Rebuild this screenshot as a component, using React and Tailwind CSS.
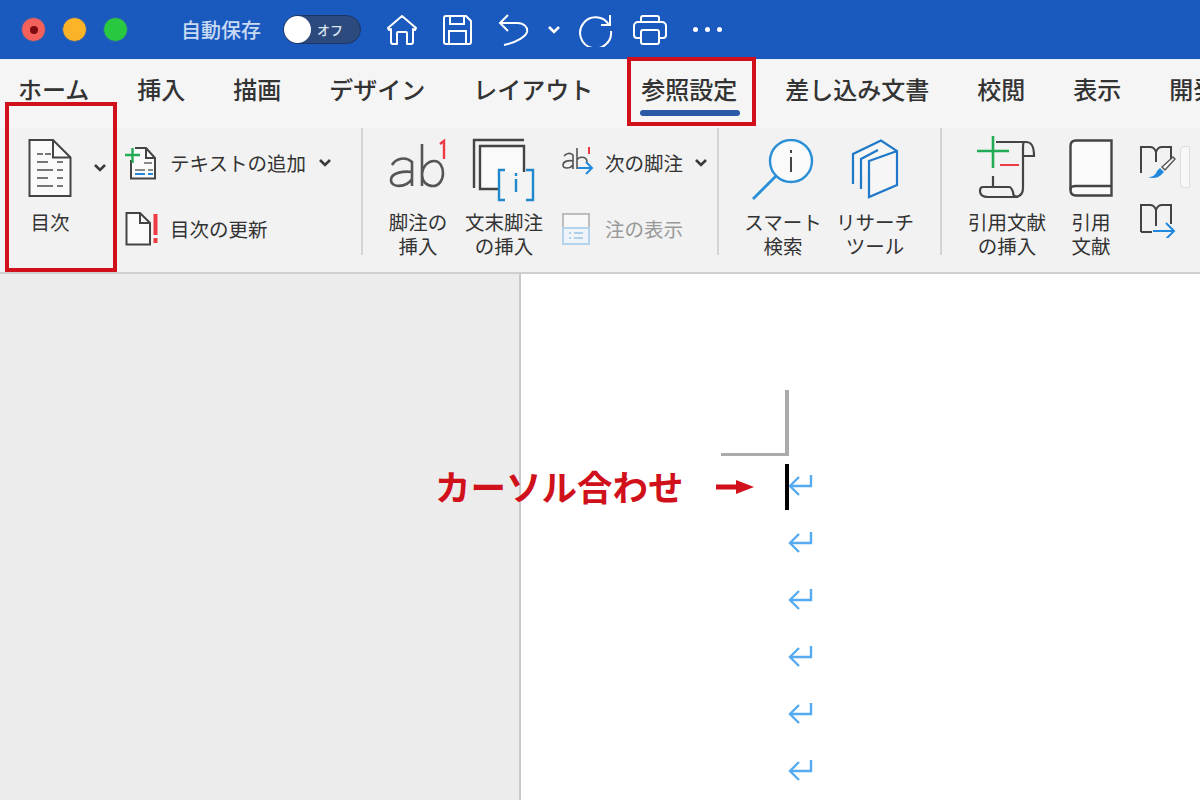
import React from "react";

const jp = { fontFamily: '"Noto Sans CJK JP", "Noto Sans", sans-serif' };

const tabs = ["ホーム", "挿入", "描画", "デザイン", "レイアウト", "参照設定", "差し込み文書", "校閲", "表示", "開発"];

const Chevron = ({ className = "" }) => (
  <svg width="14" height="10" viewBox="0 0 14 10" fill="none" className={className}>
    <path d="M2 2l5 5 5-5" stroke="#3a3a3a" strokeWidth="2.6" />
  </svg>
);

// big ribbon button: icon on top, one or two lines of label under it
const BigButton = ({ width, top, icon, lines, ml = "" }) => (
  <div className={`flex flex-col items-center shrink-0 ${width} ${ml}`}>
    <div className={`h-[82px] flex justify-center ${top}`}>{icon}</div>
    <div className="text-[19.5px] leading-[24px] text-[#333] text-center whitespace-nowrap">
      {lines.map((l) => (
        <div key={l}>{l}</div>
      ))}
    </div>
  </div>
);

const Separator = () => <div className="w-[2px] h-[127px] bg-[#d4d4d4] shrink-0" />;

const ReturnMark = () => (
  <svg width="26" height="24" viewBox="0 0 26 24" fill="none">
    <path d="M23 2v11H3" stroke="#55aaf0" strokeWidth="2.4" />
    <path d="M11 4l-9 9 9 9" stroke="#55aaf0" strokeWidth="2.4" />
  </svg>
);

const TocIcon = () => (
  <svg width="44" height="58" viewBox="0 0 44 58" fill="none">
    <path d="M1.5 1H25L42.5 18.5V57H1.5Z" fill="#fafafa" stroke="#444" strokeWidth="2" />
    <path d="M25 1V18.5H42.5" stroke="#444" strokeWidth="2" />
    <path d="M9 15h6M17 15h6M9 23h11M29 23h6M9 31h16M29 31h6M9 39h11M29 39h6M9 47h16M29 47h6" stroke="#777" strokeWidth="2" />
  </svg>
);

const AddTextIcon = () => (
  <svg width="32" height="34" viewBox="0 0 32 34" fill="none">
    <path d="M6 14V32.5H30V12L21 2H10" fill="#fafafa" stroke="#444" strokeWidth="2" />
    <path d="M21 2V12H30" stroke="#444" strokeWidth="2" />
    <path d="M0 9h15M7.500 2v15" stroke="#22aa55" strokeWidth="2.400" />
    <path d="M19 17h8M10 24h10M23 24h5" stroke="#666" strokeWidth="1.600" />
    <path d="M10 28h10M23 28h5" stroke="#2288dd" strokeWidth="2" />
  </svg>
);

const UpdateIcon = () => (
  <svg width="34" height="34" viewBox="0 0 34 34" fill="none">
    <path d="M1.500 1H15L25 11V32.500H1.500Z" fill="#fafafa" stroke="#444" strokeWidth="2" />
    <path d="M15 1V11H25" stroke="#444" strokeWidth="2" />
    <path d="M30.500 2V23M30.500 26V31" stroke="#ee3a43" strokeWidth="4" />
  </svg>
);

const FootnoteIcon = () => (
  <svg width="60" height="62" viewBox="0 0 60 62" fill="none">
    <path d="M4 27a13 13 0 0 1 20-3v24M24 34c-7-1-21 0-21 8 0 8 15 8 21-1" stroke="#555" strokeWidth="2.600" />
    <path d="M34 6V48M34 36c1-9 7-13 12-13 6 0 9 6 9 12 0 7-4 13-10 13-6 0-11-4-11-12" stroke="#555" strokeWidth="2.600" />
    <path d="M52 6l4-3V21" stroke="#ee3a43" strokeWidth="2.400" />
  </svg>
);

const EndnoteIcon = () => (
  <svg width="64" height="64" viewBox="0 0 64 64" fill="none">
    <path d="M2 50V2H52" stroke="#444" strokeWidth="2.400" />
    <path d="M8 51V8H52V51Z" fill="#fafafa" stroke="#444" strokeWidth="2.400" />
    <rect x="26" y="34" width="34" height="29" fill="#f4f4f4" />
    <path d="M33 32H27V62H33M54 32H61V62H54" stroke="#2288cc" strokeWidth="2.400" />
    <path d="M44 41V54M44 35V38" stroke="#2288cc" strokeWidth="2.400" />
  </svg>
);

const NextFootnoteIcon = () => (
  <svg width="32" height="32" viewBox="0 0 32 32" fill="none">
    <path d="M2 9a6 6 0 0 1 9-1v14M11 14C7 13 1 14 1 18c0 4 7 4 10 0" stroke="#555" strokeWidth="1.600" />
    <path d="M15 1V22M15 13c2-4 10-4 10 2" stroke="#555" strokeWidth="1.600" />
    <path d="M27 0V7" stroke="#ee3a43" strokeWidth="2" />
    <path d="M16 21H30M24 15l6 6-6 6" stroke="#2288dd" strokeWidth="2" />
  </svg>
);

const ShowNotesIcon = () => (
  <svg width="28" height="32" viewBox="0 0 28 32" fill="none">
    <path d="M1 1H27V31H1Z" fill="#f8f8f8" stroke="#bdbdbd" strokeWidth="2" />
    <path d="M1 15H27V31H1Z" fill="#eef4fa" stroke="#b4d3ec" strokeWidth="2" />
    <path d="M7 20h2M12 20h9M7 25h2M12 25h9" stroke="#9cc4e4" strokeWidth="1.600" />
  </svg>
);

const SearchIcon = () => (
  <svg width="62" height="62" viewBox="0 0 62 62" fill="none">
    <circle cx="39" cy="22" r="21" fill="#fafafa" stroke="#2a8fd6" strokeWidth="2.400" />
    <path d="M24 37L1 60" stroke="#2a8fd6" strokeWidth="2.800" />
    <path d="M39 18V33M39 11V14" stroke="#444" strokeWidth="2" />
  </svg>
);

const ResearchIcon = () => (
  <svg width="48" height="60" viewBox="0 0 48 60" fill="none">
    <path d="M2 45V15L30 1.500L46 12V46L18 58V22L46 12" fill="#f6f6f6" stroke="#1f78c8" strokeWidth="2.200" />
    <path d="M10 50V20L27 11" stroke="#1f78c8" strokeWidth="2.200" />
  </svg>
);

const CitationIcon = () => (
  <svg width="62" height="64" viewBox="0 0 62 64" fill="none">
    <path d="M20 6H50C55 6 58 9 58 20H48M48 6C47 7 47 9 47 12V52C47 58 44 61 38 61H12" fill="none" stroke="#444" strokeWidth="2.200" />
    <path d="M17 40V51H33C35 51 36 53 37 56C37 59 38 61 42 61M17 51H7C5 51 4 53 4 55C4 59 7 61 12 61H38" stroke="#444" strokeWidth="2.200" />
    <path d="M17 0V32M1 15H33" stroke="#22aa55" strokeWidth="2.600" />
    <path d="M24 29H43" stroke="#ee3a43" strokeWidth="2" />
  </svg>
);

const BookIcon = () => (
  <svg width="44" height="58" viewBox="0 0 44 58" fill="none">
    <path d="M7 1.500H42.500V56.500H7C3 56.500 1.500 54 1.500 51V7C1.500 4 3 1.500 7 1.500Z" fill="#fafafa" stroke="#444" strokeWidth="2.400" />
    <path d="M1.500 51C1.500 48 3 47 7 47H42.500" stroke="#444" strokeWidth="2.400" />
  </svg>
);

const StyleBookIcon = () => (
  <svg width="36" height="34" viewBox="0 0 36 34" fill="none">
    <path d="M1 27V1H10C13 1 15 3 16 6C17 3 19 1 22 1H31V14M16 6V16" stroke="#444" strokeWidth="2" />
    <path d="M8 31c4 0 7-1 9-6l3-3 4 4-3 3c-3 3-8 4-13 2Z" fill="#2288dd" />
    <path d="M22 21L33 11l2 2-10 11Z" fill="#fafafa" stroke="#555" strokeWidth="1.400" />
  </svg>
);

const BookArrowIcon = () => (
  <svg width="36" height="34" viewBox="0 0 36 34" fill="none">
    <path d="M1 28V1H10C13 1 15 3 16 6C17 3 19 1 22 1H31V20M16 6V22M1 28H12" stroke="#444" strokeWidth="2" />
    <path d="M13 27H33M26 19l8 8-8 8" stroke="#2288dd" strokeWidth="2" />
  </svg>
);

const App = () => {
  return (
    <div className="relative w-[1200px] h-[800px] overflow-hidden bg-[#ececec] flex flex-col" style={jp}>
      {/* title bar */}
      <div className="h-[59px] shrink-0 bg-[#1a5abf] flex items-center">
        <div className="w-[25px] h-[25px] rounded-full bg-[#f4605a] border border-[#2d5db0] ml-[21px] flex items-center justify-center">
          <div className="w-[8px] h-[8px] rounded-full bg-[#7c0c10]" />
        </div>
        <div className="w-[25px] h-[25px] rounded-full bg-[#fbb428] border border-[#2d5db0] ml-[16px]" />
        <div className="w-[25px] h-[25px] rounded-full bg-[#28c840] border border-[#2d5db0] ml-[16px]" />
        <div className="ml-[53px] text-[20px] font-medium text-[#c9daf4] whitespace-nowrap">自動保存</div>
        <div className="ml-[22px] w-[78px] h-[29px] rounded-full bg-[#2c4a7e] border border-[#1c3566] flex items-center">
          <div className="w-[27px] h-[27px] rounded-full bg-white" />
          <span className="ml-[6px] text-[13px] font-medium text-[#dbe4f2]">オフ</span>
        </div>
        <svg width="32" height="32" viewBox="0 0 32 32" fill="none" className="ml-[25px]">
          <path d="M2 14L16 2l14 12-1 2-2-1V28a2 2 0 0 1-2 2H21V19a1 1 0 0 0-1-1H12a1 1 0 0 0-1 1V30H7a2 2 0 0 1-2-2V15l-2 1Z" stroke="#fff" strokeWidth="2" strokeLinejoin="round" />
        </svg>
        <svg width="30" height="30" viewBox="0 0 30 30" fill="none" className="ml-[25px]">
          <path d="M3 1H23L28 6V27a2 2 0 0 1-2 2H3a2 2 0 0 1-2-2V3a2 2 0 0 1 2-2Z" stroke="#fff" strokeWidth="2" />
          <path d="M7 1V9H21V1M6 29V16H23V29" stroke="#fff" strokeWidth="2" />
        </svg>
        <svg width="32" height="32" viewBox="0 0 32 32" fill="none" className="ml-[25px]">
          <path d="M2 9H19C26 9 30 13 29 18C28 22 20 28 6 31" stroke="#fff" strokeWidth="2" transform="translate(0 0)" />
          <path d="M10 1L2 9l8 8" stroke="#fff" strokeWidth="2" />
        </svg>
        <Chevron className="ml-[17px] [&>path]:stroke-white" />
        <svg width="34" height="34" viewBox="0 0 34 34" fill="none" className="ml-[18px]">
          <path d="M30 12A15.500 15.500 0 1 0 32 18" stroke="#fff" strokeWidth="2" />
          <path d="M22 12H31V2" stroke="#fff" strokeWidth="2" />
        </svg>
        <svg width="34" height="30" viewBox="0 0 34 30" fill="none" className="ml-[20px]">
          <path d="M8 7V3a2 2 0 0 1 2-2H24a2 2 0 0 1 2 2V7" stroke="#fff" strokeWidth="2" />
          <path d="M8 23H4a3 3 0 0 1-3-3V11a4 4 0 0 1 4-4H29a4 4 0 0 1 4 4V20a3 3 0 0 1-3 3H26" stroke="#fff" strokeWidth="2" />
          <rect x="8" y="15" width="18" height="14" rx="2" stroke="#fff" strokeWidth="2" />
        </svg>
        <div className="ml-[26px] flex gap-[7px]">
          <div className="w-[5px] h-[5px] rounded-full bg-white" />
          <div className="w-[5px] h-[5px] rounded-full bg-white" />
          <div className="w-[5px] h-[5px] rounded-full bg-white" />
        </div>
      </div>

      {/* tabs */}
      <div className="h-[69px] shrink-0 bg-[#f5f5f5] border-t border-[#e6eefa] flex gap-12 pl-[18px] pt-[11px] whitespace-nowrap">
        {tabs.map((t) => (
          <div key={t} className="relative text-[24px] leading-[36px] font-medium text-[#333] shrink-0">
            {t}
            {t === "参照設定" && (
              <div className="absolute left-[-1px] right-[-3px] top-[39px] h-[6px] rounded-full bg-[#2b5aa6]" />
            )}
          </div>
        ))}
      </div>

      {/* ribbon */}
      <div className="h-[146px] shrink-0 bg-[#f2f2f2] border-b-2 border-[#cfcfcf] flex items-start overflow-hidden">
        <div className="w-[125px] shrink-0 relative">
          <BigButton width="w-[44px]" ml="ml-[28px]" top="pt-[11px]" icon={<TocIcon />} lines={["目次"]} />
          <Chevron className="absolute left-[93px] top-[35px]" />
        </div>
        <div className="w-[236px] shrink-0 flex flex-col">
          <div className="h-[34px] mt-[18px] flex items-center text-[19.500px] text-[#333] whitespace-nowrap">
            <AddTextIcon />
            <span className="ml-[13px]">テキストの追加</span>
            <Chevron className="ml-[12px]" />
          </div>
          <div className="h-[34px] mt-[32px] flex items-center text-[19.500px] text-[#333] whitespace-nowrap">
            <UpdateIcon />
            <span className="ml-[11px]">目次の更新</span>
          </div>
        </div>
        <Separator />
        <BigButton width="w-[58px]" ml="ml-[26px]" top="pt-[10px]" icon={<FootnoteIcon />} lines={["脚注の", "挿入"]} />
        <BigButton width="w-[80px]" ml="ml-[17px]" top="pt-[10px]" icon={<EndnoteIcon />} lines={["文末脚注", "の挿入"]} />
        <div className="w-[173px] shrink-0 flex flex-col pl-[18px]">
          <div className="h-[34px] mt-[18px] flex items-center text-[19.500px] text-[#333] whitespace-nowrap">
            <NextFootnoteIcon />
            <span className="ml-[11px]">次の脚注</span>
            <Chevron className="ml-[11px]" />
          </div>
          <div className="h-[34px] mt-[32px] flex items-center text-[19.500px] text-[#999] whitespace-nowrap">
            <ShowNotesIcon />
            <span className="ml-[15px]">注の表示</span>
          </div>
        </div>
        <Separator />
        <BigButton width="w-[78px]" ml="ml-[25px]" top="pt-[11px]" icon={<SearchIcon />} lines={["スマート", "検索"]} />
        <BigButton width="w-[78px]" ml="ml-[14px]" top="pt-[11px]" icon={<ResearchIcon />} lines={["リサーチ", "ツール"]} />
        <div className="w-[26px] shrink-0" />
        <Separator />
        <BigButton width="w-[78px]" ml="ml-[26px]" top="pt-[8px]" icon={<CitationIcon />} lines={["引用文献", "の挿入"]} />
        <BigButton width="w-[44px]" ml="ml-[23px]" top="pt-[11px]" icon={<BookIcon />} lines={["引用", "文献"]} />
        <div className="ml-[27px] shrink-0 flex flex-col">
          <div className="mt-[18px] flex items-start">
            <StyleBookIcon />
            <div className="ml-[4px] w-[10px] h-[42px] bg-[#f8f8f8] border border-[#ddd] rounded-l-[4px]" />
          </div>
          <div className="mt-[16px]">
            <BookArrowIcon />
          </div>
        </div>
      </div>

      {/* document area */}
      <div className="flex-1 flex min-h-0">
        <div className="w-[519px] shrink-0 bg-[#ececec]" />
        <div className="flex-1 bg-white border-l-2 border-[#cacaca] pt-[116px] pl-[200px]">
          <div className="w-[68px] h-[66px] border-r-4 border-b-[3px] border-[#ababab]" />
          <div className="relative flex flex-col gap-[33px] pt-[17px] pl-[67px]">
            <div className="absolute left-[64px] top-[8px] w-[4px] h-[46px] bg-black" />
            <ReturnMark />
            <ReturnMark />
            <ReturnMark />
            <ReturnMark />
            <ReturnMark />
            <ReturnMark />
          </div>
        </div>
      </div>

      {/* red annotations */}
      <div className="absolute left-[5px] top-[102px] w-[112px] h-[170px] border-[4px] border-[#d0111b]" />
      <div className="absolute left-[627px] top-[57px] w-[129px] h-[69px] border-[4px] border-[#d0111b]" />
      <div className="absolute left-[435px] top-[460px] text-[35.500px] leading-[52px] font-bold text-[#d0111b] whitespace-nowrap">カーソル合わせ</div>
      <svg width="38" height="14" viewBox="0 0 38 14" className="absolute left-[716px] top-[480px]">
        <path d="M0 4.500H20V0L38 7 20 14V9.500H0Z" fill="#d0111b" />
      </svg>
    </div>
  );
};

export default App;
